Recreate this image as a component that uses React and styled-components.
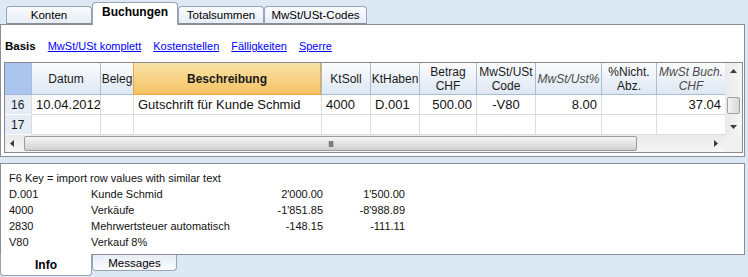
import React from "react";
import styled, { createGlobalStyle } from "styled-components";

const GlobalStyle = createGlobalStyle`
    html, body {
        margin: 0;
        padding: 0;
        background: #dde8f5;
        overflow: hidden;
    }
    body {
        font-family: "Liberation Sans", Arial, sans-serif;
        color: #000;
    }
`;

const COLS = [26, 69, 33, 188, 49, 49, 57, 59, 66, 55, 69];

const headers = [
    { label: "Datum" },
    { label: "Beleg" },
    { label: "Beschreibung", active: true },
    { label: "KtSoll" },
    { label: "KtHaben" },
    { label: ["Betrag", "CHF"] },
    { label: ["MwSt/USt", "Code"] },
    { label: "MwSt/Ust%", italic: true },
    { label: ["%Nicht.", "Abz."] },
    { label: ["MwSt Buch.", "CHF"], italic: true },
];

const rows = [
    {
        no: "16",
        cells: [
            { v: "10.04.2012" },
            { v: "" },
            { v: "Gutschrift für Kunde Schmid" },
            { v: "4000" },
            { v: "D.001" },
            { v: "500.00", align: "right" },
            { v: "-V80", align: "center" },
            { v: "8.00", align: "right" },
            { v: "" },
            { v: "37.04", align: "right" },
        ],
    },
    { no: "17", cells: Array.from({ length: 10 }, () => ({ v: "" })) },
];

const info = [
    ["D.001", "Kunde Schmid", "2'000.00", "1'500.00"],
    ["4000", "Verkäufe", "-1'851.85", "-8'988.89"],
    ["2830", "Mehrwertsteuer automatisch", "-148.15", "-111.11"],
    ["V80", "Verkauf 8%", "", ""],
];

const Arrow = ({ dir }) => {
    const pts = {
        left: "5,1 1,4.5 5,8",
        right: "2,1 6,4.5 2,8",
        up: "1,6 4.5,2 8,6",
        down: "1,3 4.5,7 8,3",
    }[dir];
    return (
        <svg width="9" height="9" viewBox="0 0 9 9">
            <polygon points={pts} fill="#3c3c3c" />
        </svg>
    );
};

const App = () => {
    return (
        <Screen>
            <GlobalStyle />
            <TabStrip>
                <Tab $w={86}>Konten</Tab>
                <Tab $w={86} $active>Buchungen</Tab>
                <Tab $w={86}>Totalsummen</Tab>
                <Tab $w={103}>MwSt/USt-Codes</Tab>
            </TabStrip>

            <Panel>
                <LinkBar>
                    <strong>Basis</strong>
                    <a href="#">MwSt/USt komplett</a>
                    <a href="#">Kostenstellen</a>
                    <a href="#">Fälligkeiten</a>
                    <a href="#">Sperre</a>
                </LinkBar>

                <GridFrame>
                    <GridTop>
                        <Table>
                            <Corner />
                            {headers.map((h, i) => (
                                <HeaderCell key={i} $active={h.active} $italic={h.italic}>
                                    {Array.isArray(h.label) ? (
                                        <span>{h.label[0]}<br />{h.label[1]}</span>
                                    ) : h.label}
                                </HeaderCell>
                            ))}
                            {rows.map((r) => (
                                <React.Fragment key={r.no}>
                                    <RowHead>{r.no}</RowHead>
                                    {r.cells.map((c, i) => (
                                        <Cell key={i} $align={c.align}>{c.v}</Cell>
                                    ))}
                                </React.Fragment>
                            ))}
                        </Table>
                        <VScroll>
                            <ScrollBtn><Arrow dir="up" /></ScrollBtn>
                            <VTrack>
                                <VThumb />
                            </VTrack>
                            <ScrollBtn><Arrow dir="down" /></ScrollBtn>
                        </VScroll>
                    </GridTop>
                    <GridBottom>
                        <HScroll>
                            <ScrollBtn><Arrow dir="left" /></ScrollBtn>
                            <HTrack>
                                <HThumb><Grip>III</Grip></HThumb>
                            </HTrack>
                            <ScrollBtn><Arrow dir="right" /></ScrollBtn>
                        </HScroll>
                        <ScrollCorner />
                    </GridBottom>
                </GridFrame>
            </Panel>

            <InfoPanel>
                <InfoGrid>
                    <InfoTitle>F6 Key = import row values with similar text</InfoTitle>
                    {info.map((r) => (
                        <React.Fragment key={r[0]}>
                            <span>{r[0]}</span>
                            <span>{r[1]}</span>
                            <Amount>{r[2]}</Amount>
                            <Amount>{r[3]}</Amount>
                        </React.Fragment>
                    ))}
                </InfoGrid>
            </InfoPanel>

            <BottomTabs>
                <BottomTab $w={92} $active>Info</BottomTab>
                <BottomTab $w={85}>Messages</BottomTab>
            </BottomTabs>
        </Screen>
    );
};

export default App;

const Screen = styled.div`
    width: 748px;
    height: 277px;
    display: flex;
    flex-direction: column;
    background: #dde8f5;
`;

const TabStrip = styled.div`
    display: flex;
    align-items: flex-end;
    height: 24px;
    padding-left: 6px;
    position: relative;
    z-index: 1;
`;

const Tab = styled.div`
    box-sizing: border-box;
    width: ${(p) => p.$w}px;
    height: ${(p) => (p.$active ? 23 : 18)}px;
    margin-bottom: ${(p) => (p.$active ? -1 : 0)}px;
    padding-bottom: ${(p) => (p.$active ? 4 : 1)}px;
    border: 1px solid #98a3b3;
    border-bottom: ${(p) => (p.$active ? "none" : "1px solid #8a8e94")};
    border-radius: 4px 4px 0 0;
    background: ${(p) => (p.$active ? "#fff" : "linear-gradient(#fbfcfe, #e6edf7)")};
    display: flex;
    align-items: center;
    justify-content: center;
    font-size: ${(p) => (p.$active ? 12 : 11.5)}px;
    font-weight: ${(p) => (p.$active ? "bold" : "normal")};
    color: #000;
`;

const Panel = styled.div`
    box-sizing: border-box;
    width: 745px;
    height: 133px;
    border: 1px solid #8a8e94;
    background: #fff;
    padding-left: 3px;
`;

const LinkBar = styled.div`
    box-sizing: border-box;
    height: 37px;
    padding: 5px 0 0 1px;
    display: flex;
    align-items: center;
    gap: 12px;
    font-size: 11px;

    & strong {
        font-size: 11.5px;
    }

    & a {
        color: #0000ff;
        text-decoration: underline;
    }
`;

const GridFrame = styled.div`
    box-sizing: border-box;
    width: 739px;
    height: 91px;
    border: 1px solid #868a90;
    display: flex;
    flex-direction: column;
`;

const GridTop = styled.div`
    display: flex;
    height: 72px;
`;

const Table = styled.div`
    display: grid;
    grid-template-columns: ${COLS.map((c) => c + "px").join(" ")};
    grid-template-rows: 32px 20px 20px;
    width: 720px;
    overflow: hidden;
`;

const Corner = styled.div`
    background: #aac6ee;
    border-bottom: 1px solid #9fb6d2;
`;

const HeaderCell = styled.div`
    box-sizing: border-box;
    display: flex;
    align-items: center;
    justify-content: center;
    text-align: center;
    font-size: 12px;
    line-height: 14px;
    font-weight: ${(p) => (p.$active ? "bold" : "normal")};
    font-style: ${(p) => (p.$italic ? "italic" : "normal")};
    color: ${(p) => (p.$italic ? "#4a4a4a" : "#1a1a1a")};
    background: ${(p) =>
        p.$active
            ? "linear-gradient(#fae3a8, #f5c263)"
            : "linear-gradient(#fbfcfe, #dde7f3)"};
    border-left: 1px solid ${(p) => (p.$active ? "#f0a23c" : "#a7bdd6")};
    border-right: ${(p) => (p.$active ? "1px solid #f0a23c" : "none")};
    border-bottom: 1px solid ${(p) => (p.$active ? "#f0a23c" : "#a7bdd6")};
    padding-top: 1px;
`;

const RowHead = styled.div`
    box-sizing: border-box;
    background: #e5ecf6;
    border-bottom: 1px solid #ffffff;
    font-size: 12px;
    display: flex;
    align-items: center;
    padding-left: 6px;
    color: #1a1a1a;
`;

const Cell = styled.div`
    box-sizing: border-box;
    border-left: 1px solid #dcdcdc;
    border-bottom: 1px solid #dcdcdc;
    font-size: 13px;
    display: flex;
    align-items: center;
    justify-content: ${(p) =>
        p.$align === "right" ? "flex-end" : p.$align === "center" ? "center" : "flex-start"};
    padding: 0 4px;
    white-space: nowrap;
    color: #111;
`;

const VScroll = styled.div`
    width: 17px;
    display: flex;
    flex-direction: column;
    background: linear-gradient(90deg, #eaeaea, #f6f6f6);
`;

const ScrollBtn = styled.div`
    flex: 0 0 17px;
    height: 17px;
    display: flex;
    align-items: center;
    justify-content: center;
`;

const VTrack = styled.div`
    flex: 1;
    padding-top: 17px;
    display: flex;
    justify-content: center;
`;

const VThumb = styled.div`
    box-sizing: border-box;
    width: 13px;
    height: 17px;
    border: 1px solid #a0a0a0;
    border-radius: 2px;
    background: linear-gradient(90deg, #f4f4f4, #d8d8d8);
`;

const GridBottom = styled.div`
    display: flex;
    height: 17px;
`;

const HScroll = styled.div`
    display: flex;
    width: 720px;
    background: linear-gradient(#e9e9e9, #f6f6f6);
`;

const HTrack = styled.div`
    flex: 1;
    padding: 1px 0 1px 2px;
    display: flex;
`;

const HThumb = styled.div`
    box-sizing: border-box;
    width: 613px;
    height: 15px;
    border: 1px solid #9c9c9c;
    border-radius: 2px;
    background: linear-gradient(#f6f6f6, #e4e4e4 50%, #cfcfcf);
    display: flex;
    align-items: center;
    justify-content: center;
`;

const Grip = styled.span`
    font-size: 9px;
    font-weight: bold;
    letter-spacing: -1px;
    color: #6a6a6a;
`;

const ScrollCorner = styled.div`
    width: 17px;
    background: #f0f0f0;
`;

const InfoPanel = styled.div`
    box-sizing: border-box;
    width: 745px;
    height: 92px;
    margin-top: 6px;
    border: 1px solid #8a8e94;
    background: #fff;
    padding: 6px 0 0 8px;
`;

const InfoGrid = styled.div`
    display: grid;
    grid-template-columns: 82px 160px 72px 82px;
    grid-auto-rows: 16px;
    font-size: 11px;
    line-height: 16px;
    color: #111;
`;

const InfoTitle = styled.div`
    grid-column: 1 / -1;
`;

const Amount = styled.span`
    text-align: right;
`;

const BottomTabs = styled.div`
    display: flex;
    align-items: flex-start;
    height: 22px;
    position: relative;
`;

const BottomTab = styled.div`
    box-sizing: border-box;
    width: ${(p) => p.$w}px;
    height: ${(p) => (p.$active ? 22 : 16)}px;
    margin-top: ${(p) => (p.$active ? -1 : 0)}px;
    border: 1px solid #98a3b3;
    border-top: none;
    border-radius: 0 0 4px 4px;
    background: ${(p) => (p.$active ? "#fff" : "linear-gradient(#e6edf7, #fbfcfe)")};
    display: flex;
    align-items: center;
    justify-content: center;
    font-size: ${(p) => (p.$active ? 12 : 11.5)}px;
    font-weight: ${(p) => (p.$active ? "bold" : "normal")};
    padding-top: ${(p) => (p.$active ? 1 : 0)}px;
`;
